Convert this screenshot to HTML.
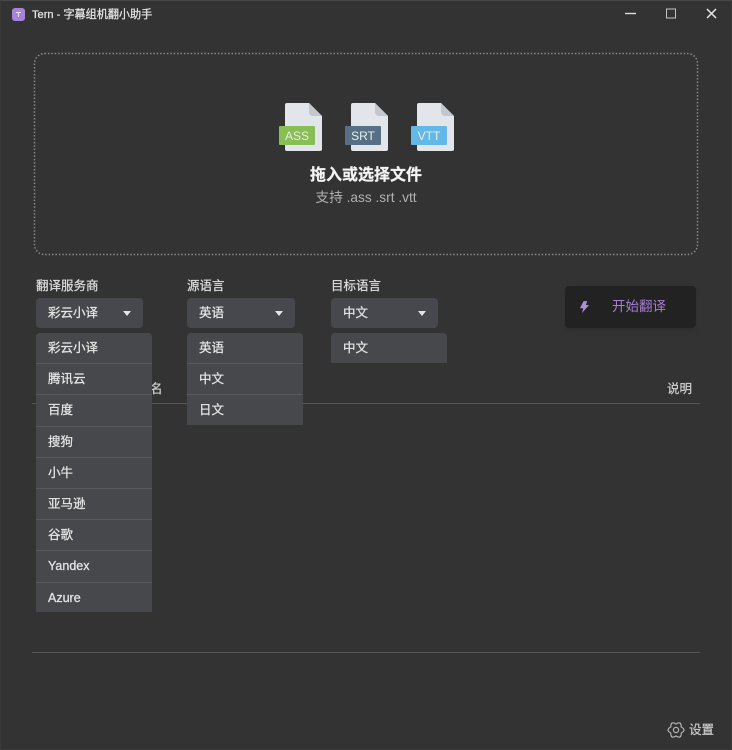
<!DOCTYPE html>
<html lang="zh">
<head>
<meta charset="utf-8">
<style>
html,body{margin:0;padding:0;width:732px;height:750px;overflow:hidden;background:#333;}
body{position:relative;font-family:"Liberation Sans","Noto Sans CJK SC",sans-serif;color:#e8e8e8;font-size:13px;}
#w{position:absolute;left:0;top:0;width:732px;height:750px;filter:blur(.3px);-webkit-text-stroke:.25px currentColor;}
.a{position:absolute;white-space:nowrap;}
.frame{position:absolute;left:0;top:0;width:730px;height:748px;border:1px solid #393939;border-top-color:#484848;}
.lbl{position:absolute;top:278px;font-size:12.5px;line-height:16px;color:#ddd;}
.sel{position:absolute;top:298px;height:30px;background:#47484d;border-radius:4px;line-height:31px;font-size:12.5px;color:#e6e6e6;box-sizing:border-box;padding-left:12px;}
.sel i{position:absolute;right:12px;top:13px;width:0;height:0;border-left:4.5px solid transparent;border-right:4.5px solid transparent;border-top:5.5px solid #e4e4e4;}
.menu{position:absolute;top:333px;background:#47484c;border-radius:4px 4px 0 0;font-size:12.5px;color:#e6e6e6;}
.menu div{height:30.2px;line-height:31px;padding-left:12px;border-bottom:1px solid #59595c;}
.menu div:last-child{border-bottom:0;}
.hr{position:absolute;left:32px;width:668px;height:1px;background:#555;}
</style>
</head>
<body>
<div id="w">
<div class="frame"></div>
<svg class="a" style="left:12px;top:8px" width="13" height="13" viewBox="0 0 13 13"><rect width="13" height="13" rx="3" fill="#a884d8"/><path d="M4 4.500h5M6.500 4.500v4.500" stroke="#e8e0f4" stroke-width="1" fill="none"/></svg>
<div class="a" style="left:32px;top:6.500px;font-size:11.100px;line-height:16px;color:#e6e6e6;">Tern - 字幕组机翻小助手</div>
<svg class="a" style="left:620px;top:5px" width="100" height="18" viewBox="0 0 100 18"><path d="M5 8.500H16" stroke="#ddd" stroke-width="1.400"/><rect x="46.500" y="4" width="9" height="9" fill="none" stroke="#c4c4c4" stroke-width="1"/><path d="M87 4L96 13M96 4L87 13" stroke="#e6e6e6" stroke-width="1.500"/></svg>

<svg class="a" style="left:0;top:0" width="732" height="300"><rect x="34.500" y="53.500" width="663" height="201" rx="10" fill="none" stroke="#8a8a8a" stroke-width="1.500" stroke-dasharray="1.500 1.900"/></svg>
<svg class="a" style="left:278px;top:102px;-webkit-text-stroke:0" width="178" height="52" viewBox="0 0 178 52">
<g><path d="M9 1H31L44 14V47a2 2 0 0 1-2 2H9a2 2 0 0 1-2-2V3a2 2 0 0 1 2-2Z" fill="#e2e5ea"/><path d="M31 1L44 14H35a4 4 0 0 1-4-4Z" fill="#c3c7ce"/><rect x="1" y="24" width="36" height="19" rx="1" fill="#88bf55"/></g>
<g><path d="M75 1H97L110 14V47a2 2 0 0 1-2 2H75a2 2 0 0 1-2-2V3a2 2 0 0 1 2-2Z" fill="#e2e5ea"/><path d="M97 1L110 14H101a4 4 0 0 1-4-4Z" fill="#c3c7ce"/><rect x="67" y="24" width="36" height="19" rx="1" fill="#577086"/></g>
<g><path d="M141 1H163L176 14V47a2 2 0 0 1-2 2H141a2 2 0 0 1-2-2V3a2 2 0 0 1 2-2Z" fill="#e2e5ea"/><path d="M163 1L176 14H167a4 4 0 0 1-4-4Z" fill="#c3c7ce"/><rect x="133" y="24" width="36" height="19" rx="1" fill="#62b8e6"/></g>
<g font-family="Liberation Sans,sans-serif" font-size="12" fill="#e6efe4" text-anchor="middle"><text x="19" y="38">ASS</text><text x="85" y="38">SRT</text><text x="151" y="38">VTT</text></g>
</svg>
<div class="a" style="left:0;width:732px;top:165px;text-align:center;font-size:16px;font-weight:700;line-height:22px;color:#f4f4f4;">拖入或选择文件</div>
<div class="a" style="left:0;width:732px;top:189px;text-align:center;font-size:13.700px;line-height:18px;color:#b0b0b0;-webkit-text-stroke:0;">支持 .ass .srt .vtt</div>

<div class="a" style="left:150px;top:381px;font-size:12.500px;line-height:16px;color:#cfcfcf;">名</div>
<div class="a" style="left:667px;top:381px;font-size:12.500px;line-height:16px;color:#cfcfcf;">说明</div>
<div class="hr" style="top:403px;"></div>
<div class="hr" style="top:652px;"></div>

<div class="lbl" style="left:36px;">翻译服务商</div>
<div class="lbl" style="left:187px;">源语言</div>
<div class="lbl" style="left:331px;">目标语言</div>

<div class="sel" style="left:36px;width:107px;">彩云小译<i></i></div>
<div class="sel" style="left:187px;width:108px;">英语<i></i></div>
<div class="sel" style="left:331px;width:107px;">中文<i></i></div>

<div class="menu" style="left:36px;width:116px;height:279px;">
<div>彩云小译</div><div>腾讯云</div><div>百度</div><div>搜狗</div><div>小牛</div><div>亚马逊</div><div>谷歌</div><div>Yandex</div><div>Azure</div>
</div>
<div class="menu" style="left:187px;width:116px;height:92px;">
<div>英语</div><div>中文</div><div>日文</div>
</div>
<div class="menu" style="left:331px;width:116px;height:30px;">
<div style="border:0">中文</div>
</div>

<div class="a" style="left:565px;top:286px;width:131px;height:42px;background:#222;border-radius:4px;box-shadow:0 2px 6px rgba(0,0,0,.12);"></div>
<svg class="a" style="left:578px;top:300px;-webkit-text-stroke:0" width="12" height="14" viewBox="0 0 12 14"><path d="M5.500 1.300L9.200 1L7.800 5H11L4 13L5.300 8.300H2Z" fill="#b08fe0"/></svg>
<div class="a" style="left:612px;top:298px;font-size:13.500px;line-height:18px;color:#a77fd6;-webkit-text-stroke:0;">开始翻译</div>

<svg class="a" style="left:667px;top:721px" width="18" height="18" viewBox="0 0 18 18" fill="none" stroke="#b4b4b4" stroke-width="1.200" stroke-linejoin="round"><path d="M14.200 6Q19.800 9 14.200 12Q14.400 18.350 9 15Q3.600 18.350 3.800 12Q-1.800 9 3.800 6Q3.600 -.35 9 3Q14.400 -.35 14.200 6Z"/><circle cx="9" cy="9" r="2.600"/></svg>
<div class="a" style="left:689px;top:722px;font-size:12.500px;line-height:16px;color:#c8c8c8;">设置</div>
</div>
</body>
</html>
